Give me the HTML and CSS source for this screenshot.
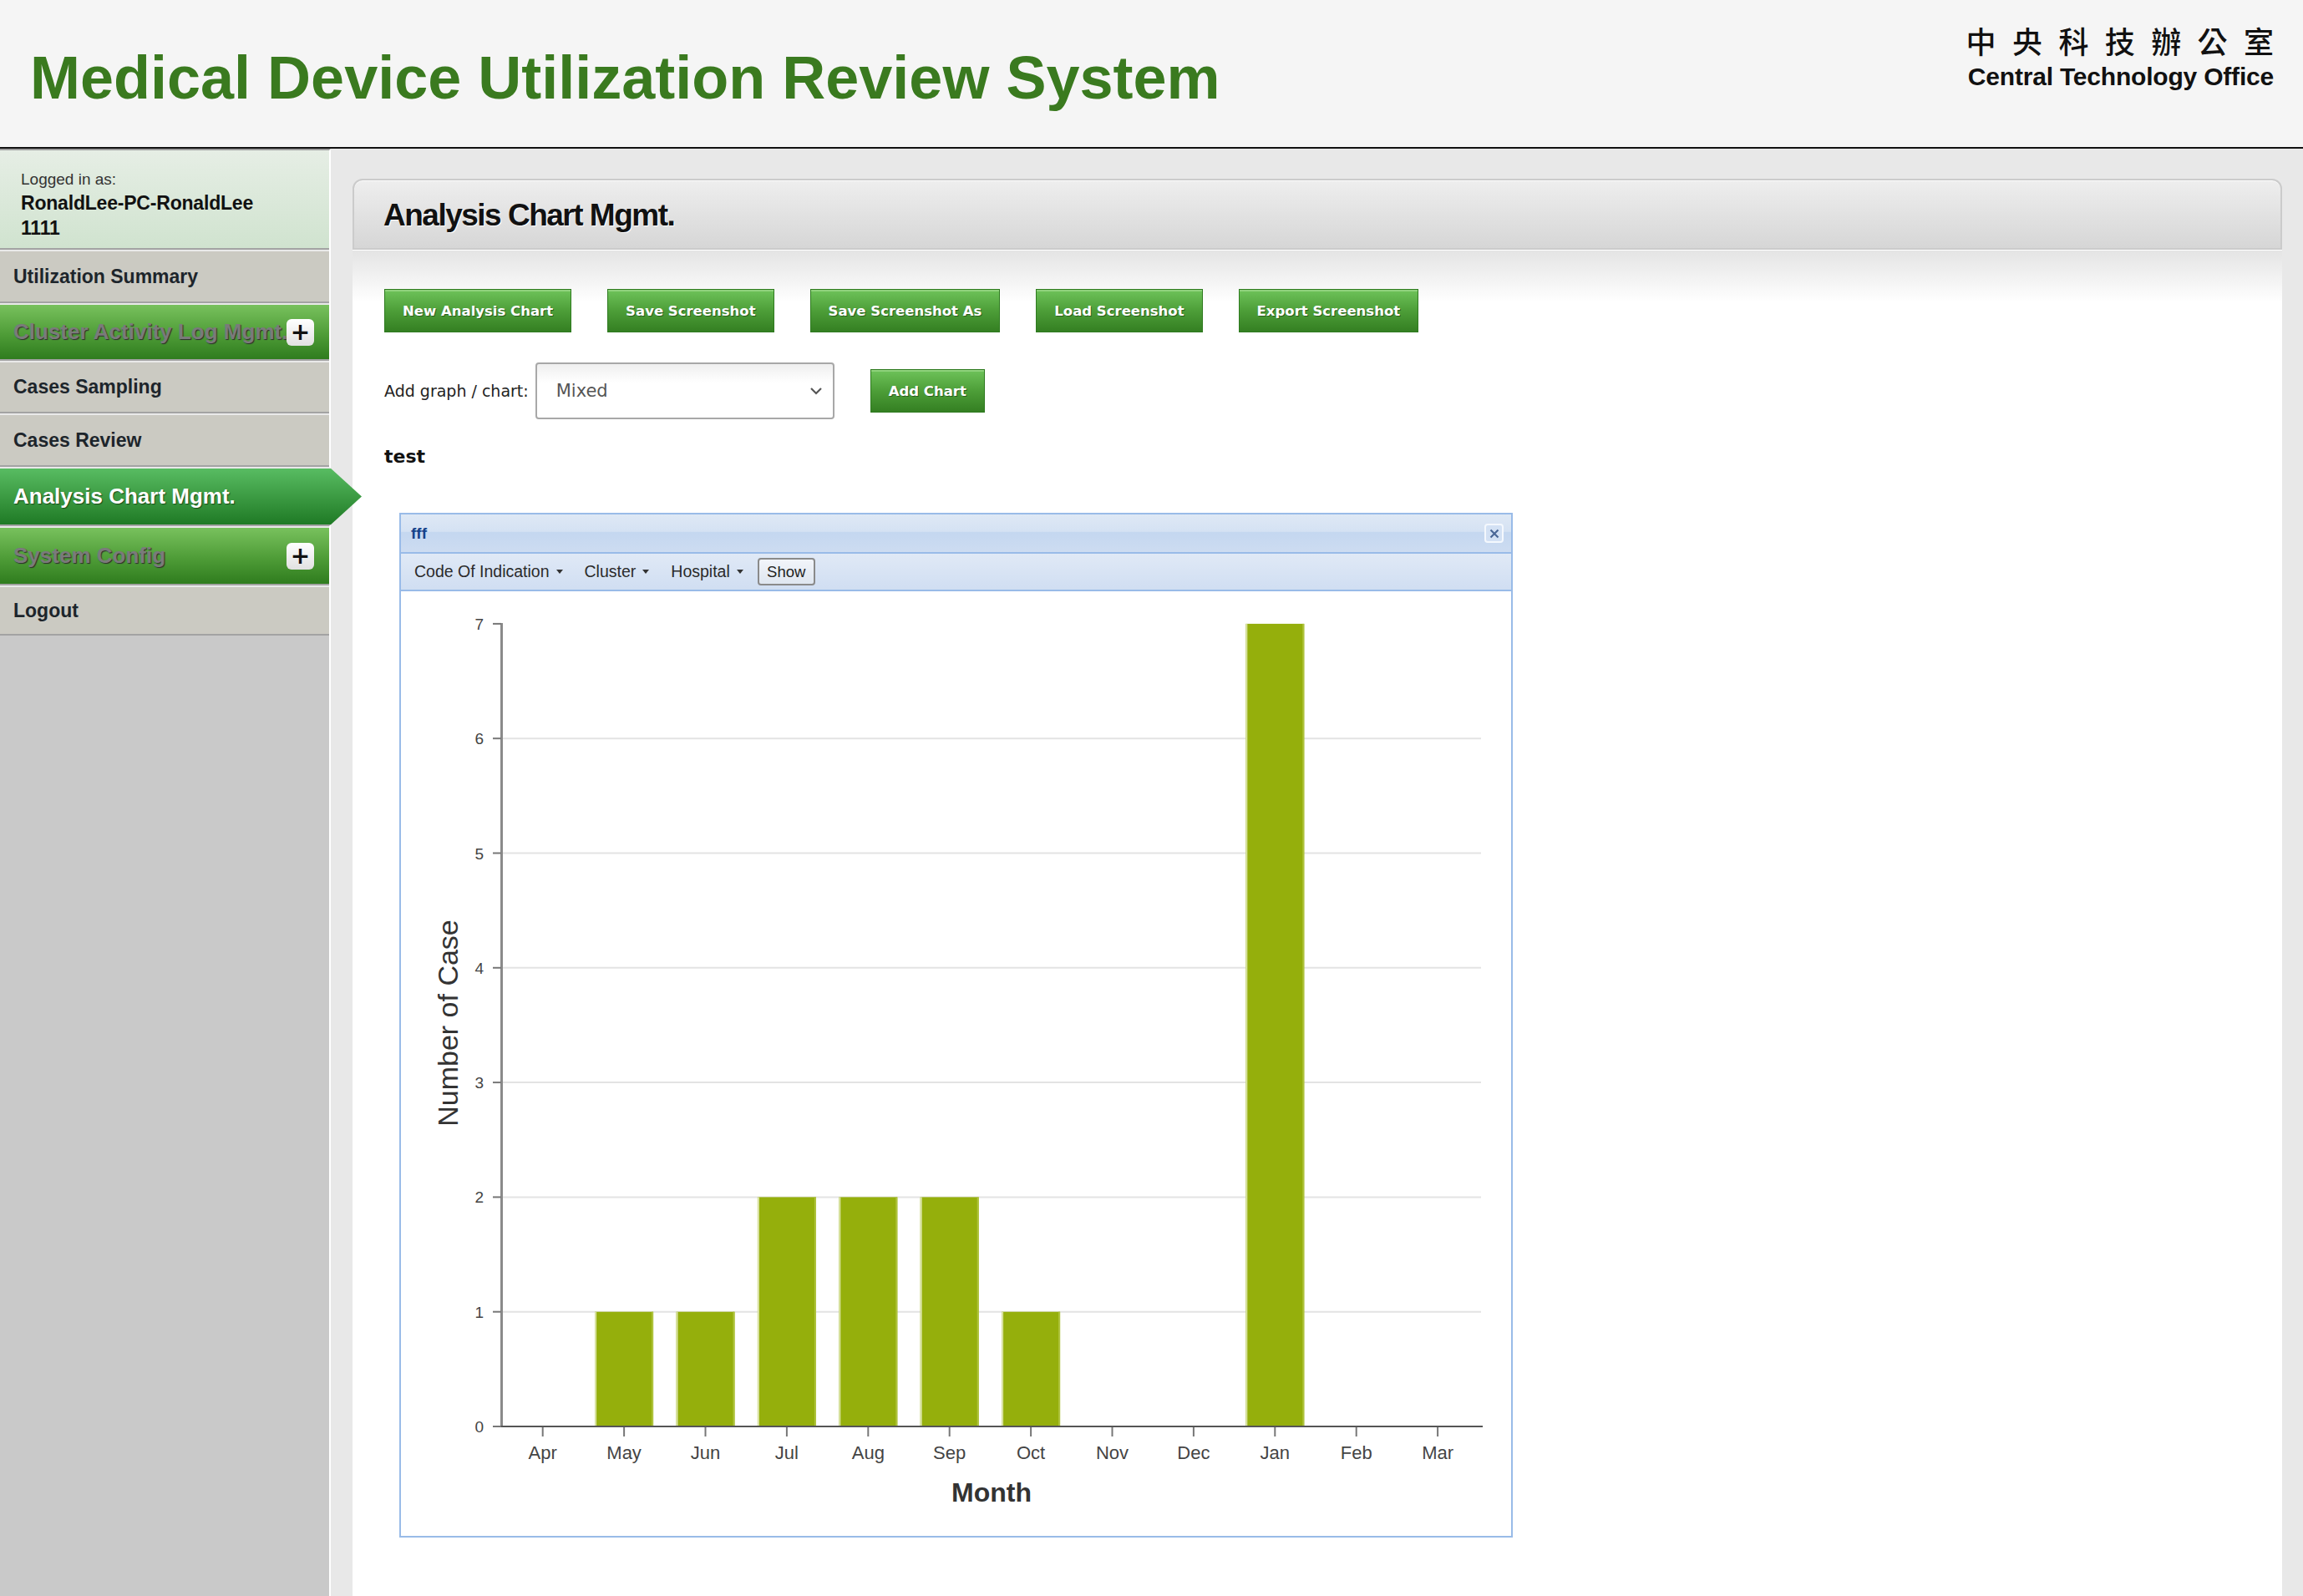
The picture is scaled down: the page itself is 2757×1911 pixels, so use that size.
FILE: index.html
```html
<!DOCTYPE html>
<html lang="en">
<head>
<meta charset="utf-8">
<title>Medical Device Utilization Review System</title>
<link rel="stylesheet" href="styles.css">
</head>
<body>
<header class="top">
  <h1 class="app-title">Medical Device Utilization Review System</h1>
  <div class="org">
    <div class="org-zh">中央科技辦公室</div>
    <div class="org-en">Central Technology Office</div>
  </div>
</header>
<div class="main">
  <nav class="sidebar">
    <div class="user-box">
      <div class="user-label">Logged in as:</div>
      <div class="user-name">RonaldLee-PC-RonaldLee<br>1111</div>
    </div>
    <a class="nav-item nav-h60">Utilization Summary</a>
    <a class="nav-item nav-group nav-h65"><span class="nav-text">Cluster Activity Log Mgmt.</span><span class="plus">+</span></a>
    <a class="nav-item nav-h59">Cases Sampling</a>
    <a class="nav-item nav-h60">Cases Review</a>
    <a class="nav-item nav-active"><span class="nav-text">Analysis Chart Mgmt.</span></a>
    <a class="nav-item nav-group nav-h67"><span class="nav-text">System Config</span><span class="plus">+</span></a>
    <a class="nav-item nav-h56">Logout</a>
  </nav>
  <div class="content">
    <section class="panel">
      <div class="panel-head"><h2 class="panel-title">Analysis Chart Mgmt.</h2></div>
      <div class="panel-body">
        <div class="btn-row">
          <button class="btn">New Analysis Chart</button>
          <button class="btn">Save Screenshot</button>
          <button class="btn">Save Screenshot As</button>
          <button class="btn">Load Screenshot</button>
          <button class="btn">Export Screenshot</button>
        </div>
        <div class="add-row">
          <span class="add-label">Add graph / chart:</span>
          <div class="select"><span class="select-value">Mixed</span>
            <svg class="chev" width="16" height="10" viewBox="0 0 16 10"><path d="M2 2 L8 8 L14 2" fill="none" stroke="#555" stroke-width="2.2"/></svg>
          </div>
          <button class="btn btn-add">Add Chart</button>
        </div>
        <div class="screen-name">test</div>
        <div class="chart-box">
          <div class="chart-head">
            <span class="chart-title">fff</span>
            <span class="close-btn"><svg width="14" height="14" viewBox="0 0 14 14"><path d="M2.5 2.5 L11.5 11.5 M11.5 2.5 L2.5 11.5" stroke="#4a6796" stroke-width="2.2"/></svg></span>
          </div>
          <div class="chart-tools">
            <span class="tool-menu">Code Of Indication<i class="caret"></i></span>
            <span class="tool-menu">Cluster<i class="caret"></i></span>
            <span class="tool-menu tool-last">Hospital<i class="caret"></i></span>
            <span class="show-btn">Show</span>
          </div>
          <svg class="chart-svg" width="1329" height="1131" viewBox="0 0 1329 1131">
            <g stroke="#e3e3e3" stroke-width="2">
              <line x1="122" x2="1293" y1="862.7" y2="862.7"/>
              <line x1="122" x2="1293" y1="725.4" y2="725.4"/>
              <line x1="122" x2="1293" y1="588.1" y2="588.1"/>
              <line x1="122" x2="1293" y1="450.8" y2="450.8"/>
              <line x1="122" x2="1293" y1="313.5" y2="313.5"/>
              <line x1="122" x2="1293" y1="176.2" y2="176.2"/>
            </g>
            <g fill="#95af0c">
              <rect x="232.1" y="862.7" width="70" height="137.3"/>
              <rect x="329.5" y="862.7" width="70" height="137.3"/>
              <rect x="426.9" y="725.4" width="70" height="274.6"/>
              <rect x="524.3" y="725.4" width="70" height="274.6"/>
              <rect x="621.7" y="725.4" width="70" height="274.6"/>
              <rect x="719.1" y="862.7" width="70" height="137.3"/>
              <rect x="1011.3" y="38.9" width="70" height="961.1"/>
            </g>
            <g fill="#dbe4a6">
              <rect x="232.1" y="862.7" width="2" height="137.3"/>
              <rect x="329.5" y="862.7" width="2" height="137.3"/>
              <rect x="426.9" y="725.4" width="2" height="274.6"/>
              <rect x="524.3" y="725.4" width="2" height="274.6"/>
              <rect x="621.7" y="725.4" width="2" height="274.6"/>
              <rect x="719.1" y="862.7" width="2" height="137.3"/>
              <rect x="1011.3" y="38.9" width="2" height="961.1"/>
            </g>
            <g fill="#aec33c">
              <rect x="300.1" y="862.7" width="2" height="137.3"/>
              <rect x="397.5" y="862.7" width="2" height="137.3"/>
              <rect x="494.9" y="725.4" width="2" height="274.6"/>
              <rect x="592.3" y="725.4" width="2" height="274.6"/>
              <rect x="689.7" y="725.4" width="2" height="274.6"/>
              <rect x="787.1" y="862.7" width="2" height="137.3"/>
              <rect x="1079.3" y="38.9" width="2" height="961.1"/>
            </g>
            <line x1="120.5" x2="120.5" y1="38" y2="1001" stroke="#8a8a8a" stroke-width="3"/>
            <line x1="119" x2="1295" y1="1000" y2="1000" stroke="#555" stroke-width="2"/>
            <g stroke="#777" stroke-width="2">
              <line x1="110" x2="120" y1="1000" y2="1000"/>
              <line x1="110" x2="120" y1="862.7" y2="862.7"/>
              <line x1="110" x2="120" y1="725.4" y2="725.4"/>
              <line x1="110" x2="120" y1="588.1" y2="588.1"/>
              <line x1="110" x2="120" y1="450.8" y2="450.8"/>
              <line x1="110" x2="120" y1="313.5" y2="313.5"/>
              <line x1="110" x2="120" y1="176.2" y2="176.2"/>
              <line x1="110" x2="120" y1="38.9" y2="38.9"/>
              <line x1="169.7" x2="169.7" y1="1001" y2="1012"/>
              <line x1="267.1" x2="267.1" y1="1001" y2="1012"/>
              <line x1="364.5" x2="364.5" y1="1001" y2="1012"/>
              <line x1="461.9" x2="461.9" y1="1001" y2="1012"/>
              <line x1="559.3" x2="559.3" y1="1001" y2="1012"/>
              <line x1="656.7" x2="656.7" y1="1001" y2="1012"/>
              <line x1="754.1" x2="754.1" y1="1001" y2="1012"/>
              <line x1="851.5" x2="851.5" y1="1001" y2="1012"/>
              <line x1="948.9" x2="948.9" y1="1001" y2="1012"/>
              <line x1="1046.3" x2="1046.3" y1="1001" y2="1012"/>
              <line x1="1143.7" x2="1143.7" y1="1001" y2="1012"/>
              <line x1="1241.1" x2="1241.1" y1="1001" y2="1012"/>
            </g>
            <g class="tick-y" text-anchor="end">
              <text x="99" y="1007">0</text>
              <text x="99" y="869.7">1</text>
              <text x="99" y="732.4">2</text>
              <text x="99" y="595.1">3</text>
              <text x="99" y="457.8">4</text>
              <text x="99" y="320.5">5</text>
              <text x="99" y="183.2">6</text>
              <text x="99" y="45.9">7</text>
            </g>
            <g class="tick-x" text-anchor="middle">
              <text x="169.7" y="1039">Apr</text>
              <text x="267.1" y="1039">May</text>
              <text x="364.5" y="1039">Jun</text>
              <text x="461.9" y="1039">Jul</text>
              <text x="559.3" y="1039">Aug</text>
              <text x="656.7" y="1039">Sep</text>
              <text x="754.1" y="1039">Oct</text>
              <text x="851.5" y="1039">Nov</text>
              <text x="948.9" y="1039">Dec</text>
              <text x="1046.3" y="1039">Jan</text>
              <text x="1143.7" y="1039">Feb</text>
              <text x="1241.1" y="1039">Mar</text>
            </g>
            <text class="axis-title-x" x="707" y="1090" text-anchor="middle">Month</text>
            <text class="axis-title-y" transform="translate(68,517) rotate(-90)" text-anchor="middle">Number of Case</text>
          </svg>
        </div>
      </div>
    </section>
  </div>
</div>
</body>
</html>
```

FILE: styles.css
```css
html, body {
  margin: 0;
  padding: 0;
}
body {
  background: #e8e8e8;
  font-family: "DejaVu Sans", Verdana, sans-serif;
  color: #222;
}

/* header */
.top {
  height: 176px;
  background: #f5f5f5;
  border-bottom: 2px solid #111;
  display: flex;
  justify-content: space-between;
  align-items: flex-start;
}
.app-title {
  margin: 0;
  padding: 57px 0 0 36px;
  font: bold 72px/1 "Liberation Sans", Arial, sans-serif;
  color: #3a7a1f;
}
.org {
  padding: 30px 35px 0 0;
  text-align: right;
  color: #111;
}
.org-zh {
  font: 500 36px/1 "Noto Sans CJK TC", "Noto Sans CJK SC", sans-serif;
  letter-spacing: 19.4px;
  margin-right: -19.4px;
}
.org-en {
  margin-top: 11px;
  font: bold 30px/1 "Liberation Sans", Arial, sans-serif;
  letter-spacing: -0.2px;
}

/* layout */
.main {
  display: flex;
  min-height: calc(100vh - 178px);
}
.sidebar {
  width: 394px;
  flex: none;
  background: #c9c9c9;
  border-top: 2px solid #9c9c9c;
  border-right: 2px solid #fff;
  font-family: "Liberation Sans", Arial, sans-serif;
}
.content {
  flex: 1;
  padding: 36px 25px 0 26px;
  display: flex;
  flex-direction: column;
}

/* sidebar */
.user-box {
  height: 117px;
  border-bottom: 2px solid #a3a3a3;
  background: linear-gradient(#e6eee5, #d0e3cf);
}
.user-label {
  padding: 24px 0 0 25px;
  font-size: 19px;
  line-height: 22px;
  color: #333;
}
.user-name {
  margin-top: 2px;
  padding-left: 25px;
  font-weight: bold;
  font-size: 23px;
  line-height: 30px;
  letter-spacing: -0.2px;
  color: #111;
}
.nav-item {
  display: flex;
  align-items: center;
  padding-left: 16px;
  border-top: 2px solid #e9e9e9;
  border-bottom: 2px solid #a3a3a3;
  background: #cbcac2;
  font-weight: bold;
  font-size: 23px;
  color: #1d252b;
  white-space: nowrap;
}
.nav-h56 { height: 56px; }
.nav-h59 { height: 59px; }
.nav-h60 { height: 60px; }
.nav-h65 { height: 65px; }
.nav-h67 { height: 67px; }
.nav-text {
  flex: 1;
  min-width: 0;
}
.nav-group {
  font-size: 26px;
  background: linear-gradient(#78c15d, #4e9c37 55%, #2f7c1e);
  color: #7a7a7a;
  text-shadow: 1px 1px 1px #2d2d2d;
}
.plus {
  flex: none;
  width: 33px;
  height: 32px;
  margin-right: 18px;
  border-radius: 6px;
  background: linear-gradient(#ffffff, #e1e1e1);
  color: #111;
  text-shadow: none;
  font: bold 28px/32px "DejaVu Sans", sans-serif;
  text-align: center;
}
.nav-active {
  position: relative;
  z-index: 1;
  width: 433px;
  box-sizing: border-box;
  height: 71px;
  font-size: 26px;
  color: #fff;
  background: linear-gradient(#58bc62, #3c9b43 50%, #1f7a25);
  text-shadow: 1px 1px 1px #1a4a1a;
  clip-path: polygon(0 0, 394px 0, 100% 50%, 394px 100%, 0 100%);
}

/* panel */
.panel {
  flex: 1;
  display: flex;
  flex-direction: column;
}
.panel-head {
  height: 81px;
  border: 2px solid #cbcbcb;
  border-radius: 12px 12px 0 0;
  background: linear-gradient(#eeeeee, #d6d6d6);
  box-shadow: inset 0 1px 0 #fafafa;
  display: flex;
  align-items: center;
  padding-left: 35px;
}
.panel-title {
  margin: 0;
  padding-top: 4px;
  font: bold 37px/1.15 "Liberation Sans", Arial, sans-serif;
  letter-spacing: -1.5px;
  color: #111;
  text-shadow: 1px 1px 0 #fff;
}
.panel-body {
  flex: 1;
  border-top: 1px solid #fff;
  background: linear-gradient(#e4e4e4, #ffffff 62px);
  padding: 46px 38px 40px 38px;
}

/* buttons */
.btn-row {
  display: flex;
  gap: 43px;
}
.btn {
  height: 52px;
  padding: 0 21px;
  margin: 0;
  border: 1px solid #2e7a1f;
  border-radius: 0;
  background: linear-gradient(#6ec35a, #4d9e38 50%, #347f22);
  box-shadow: inset 0 2px 0 #8fd27c;
  color: #fff;
  font: bold 16.5px "DejaVu Sans", Verdana, sans-serif;
  text-shadow: 1px 1px 0 #2a5e1c;
  white-space: nowrap;
}
.add-row {
  display: flex;
  align-items: center;
  margin-top: 36px;
  height: 68px;
}
.add-label {
  font-size: 19px;
  color: #222;
  margin-right: 8px;
}
.select {
  width: 358px;
  height: 68px;
  box-sizing: border-box;
  border: 2px solid #a8a8a8;
  border-radius: 4px;
  background: linear-gradient(#efefef, #ffffff 35%);
  display: flex;
  align-items: center;
  justify-content: space-between;
  padding: 0 12px 0 23px;
  margin-right: 43px;
}
.select-value {
  font-size: 21px;
  color: #555;
}
.screen-name {
  margin-top: 32px;
  font-weight: bold;
  font-size: 22px;
  line-height: 26px;
  color: #111;
}

/* chart window */
.chart-box {
  margin: 54px 0 0 18px;
  width: 1333px;
  box-sizing: border-box;
  border: 2px solid #99bbe8;
  background: #fff;
}
.chart-head {
  height: 45px;
  border-bottom: 2px solid #99bbe8;
  background: linear-gradient(#dee8f5 0%, #d5e2f3 45%, #c4d7f0 48%, #cddcf1 100%);
  display: flex;
  align-items: center;
  justify-content: space-between;
  padding: 0 9px 0 12px;
}
.chart-title {
  font: bold 19px "Liberation Sans", Arial, sans-serif;
  color: #15428b;
}
.close-btn {
  width: 23px;
  height: 23px;
  box-sizing: border-box;
  border: 2px solid #f4f8fd;
  border-radius: 4px;
  background: #d3e1f4;
  display: flex;
  align-items: center;
  justify-content: center;
}
.chart-tools {
  height: 43px;
  border-bottom: 2px solid #99bbe8;
  background: linear-gradient(#e0e9f6, #d0def2);
  display: flex;
  align-items: center;
  padding-left: 16px;
  font: 19.5px "Liberation Sans", Arial, sans-serif;
  color: #2b2b2b;
}
.tool-menu {
  display: flex;
  align-items: center;
  margin-right: 26px;
}
.tool-last {
  margin-right: 17px;
}
.caret {
  width: 0;
  height: 0;
  margin-left: 8px;
  border-left: 4px solid transparent;
  border-right: 4px solid transparent;
  border-top: 5px solid #333;
}
.show-btn {
  width: 69px;
  height: 33px;
  box-sizing: border-box;
  border: 2px solid #8a8a8a;
  border-radius: 4px;
  background: linear-gradient(#f2f5fa, #dfe6f0);
  display: flex;
  align-items: center;
  justify-content: center;
  font-size: 18.5px;
  color: #222;
}
.chart-svg {
  display: block;
}
.tick-y text {
  font: 19px "Liberation Sans", Arial, sans-serif;
  fill: #444;
}
.tick-x text {
  font: 22px "Liberation Sans", Arial, sans-serif;
  fill: #444;
}
.axis-title-x {
  font: bold 32px "Liberation Sans", Arial, sans-serif;
  fill: #333;
}
.axis-title-y {
  font: 34px "Liberation Sans", Arial, sans-serif;
  fill: #333;
}
```
